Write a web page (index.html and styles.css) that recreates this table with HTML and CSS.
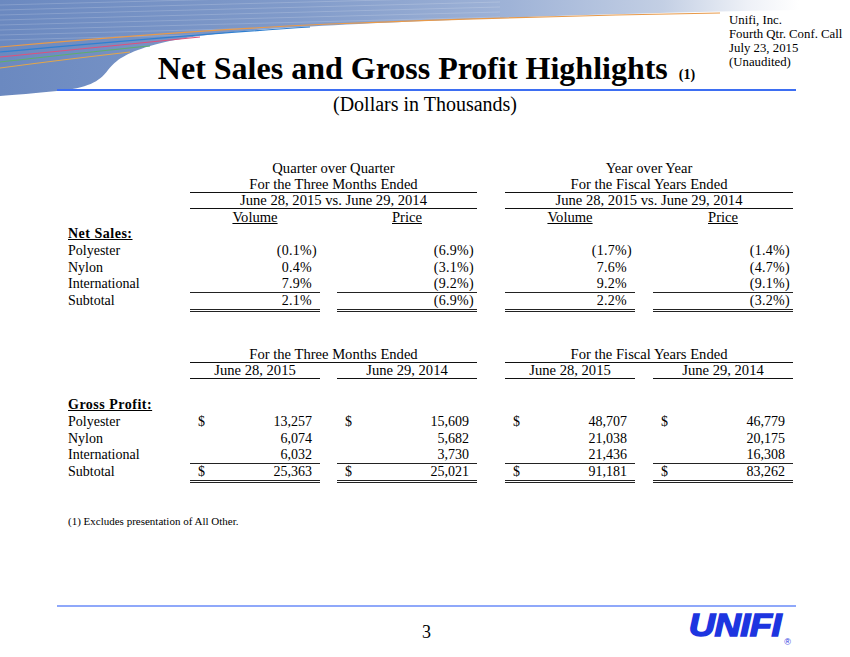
FILE: index.html
```html
<!DOCTYPE html>
<html lang="en">
<head>
<meta charset="utf-8">
<title>Net Sales and Gross Profit Highlights</title>
<link rel="stylesheet" href="styles.css">
</head>
<body>
<div class="slide">
  <header class="top">
    <svg class="swoosh" width="850" height="100" viewBox="0 0 850 100" aria-hidden="true">
      <defs>
        <linearGradient id="band" x1="0" y1="0" x2="850" y2="0" gradientUnits="userSpaceOnUse">
          <stop offset="0" stop-color="#6b89c0"/>
          <stop offset="0.35" stop-color="#819bca"/>
          <stop offset="0.6" stop-color="#9fb3d7"/>
          <stop offset="0.78" stop-color="#c3cfe4"/>
          <stop offset="0.88" stop-color="#eef1f7"/>
          <stop offset="0.94" stop-color="#ffffff"/>
        </linearGradient>
        <clipPath id="bandclip">
          <path d="M0,0 H850 V9 C660,12 440,19 300,27 C230,31 180,37 150,46 C126,53 116,60 108,70 C99,82 88,88 57,91 C35,93 15,95 0,96 Z"/>
        </clipPath>
      </defs>
      <path d="M0,0 H850 V9 C660,12 440,19 300,27 C230,31 180,37 150,46 C126,53 116,60 108,70 C99,82 88,88 57,91 C35,93 15,95 0,96 Z" fill="url(#band)"/>
      <g clip-path="url(#bandclip)" stroke="#ffffff" stroke-opacity="0.22" stroke-width="0.8" fill="none">
        <path d="M0,5 L500,-8"/>
        <path d="M0,10 L500,-3"/>
        <path d="M0,15 L500,2"/>
        <path d="M0,20 L500,7"/>
        <path d="M0,25 L500,12"/>
        <path d="M0,30 L500,17"/>
        <path d="M0,35 L500,22"/>
        <path d="M0,40 L500,27"/>
      </g>
      <g fill="none" stroke-width="1.2">
        <path d="M0,47 C90,39 200,30 330,24 C460,19 600,15 720,13" stroke="#e89a4a"/>
        <path d="M0,52 C90,44 200,34 310,27" stroke="#2f7fd0"/>
        <path d="M0,57 C70,50 140,43 200,37" stroke="#e0507a"/>
        <path d="M0,62 C55,56 105,50 150,46" stroke="#5fae6a"/>
        <path d="M0,68 C45,62 95,56 130,52" stroke="#e3a64a"/>
      </g>
    </svg>
    <div class="meta">
      <div>Unifi, Inc.</div>
      <div>Fourth Qtr. Conf. Call</div>
      <div>July 23, 2015</div>
      <div>(Unaudited)</div>
    </div>
    <h1 class="title">Net Sales and Gross Profit Highlights <span class="note">(1)</span></h1>
  </header>

  <div class="subtitle">(Dollars in Thousands)</div>

  <table class="fin t1">
    <colgroup>
      <col class="w-label"><col class="w-a"><col class="w-g1"><col class="w-b"><col class="w-g2"><col class="w-a"><col class="w-g3"><col class="w-b">
    </colgroup>
    <thead>
      <tr class="h16"><th></th><th colspan="3">Quarter over Quarter</th><th></th><th colspan="3">Year over Year</th></tr>
      <tr class="h16"><th></th><th colspan="3" class="rule">For the Three Months Ended</th><th></th><th colspan="3" class="rule">For the Fiscal Years Ended</th></tr>
      <tr class="h15"><th></th><th colspan="3" class="rule">June 28, 2015 vs. June 29, 2014</th><th></th><th colspan="3" class="rule">June 28, 2015 vs. June 29, 2014</th></tr>
      <tr class="h16"><th></th><th class="u">Volume</th><th></th><th class="u">Price</th><th></th><th class="u">Volume</th><th></th><th class="u">Price</th></tr>
    </thead>
    <tbody>
      <tr class="h17"><td class="sec">Net Sales:</td><td colspan="7"></td></tr>
      <tr class="h17"><td>Polyester</td><td class="pct">(0.1%)</td><td></td><td class="pct">(6.9%)</td><td></td><td class="pct">(1.7%)</td><td></td><td class="pct">(1.4%)</td></tr>
      <tr class="h17"><td>Nylon</td><td class="pct">0.4%<span class="pad">)</span></td><td></td><td class="pct">(3.1%)</td><td></td><td class="pct">7.6%<span class="pad">)</span></td><td></td><td class="pct">(4.7%)</td></tr>
      <tr class="h16"><td>International</td><td class="pct line">7.9%<span class="pad">)</span></td><td></td><td class="pct line">(9.2%)</td><td></td><td class="pct line">9.2%<span class="pad">)</span></td><td></td><td class="pct line">(9.1%)</td></tr>
      <tr class="h16"><td>Subtotal</td><td class="pct dbl">2.1%<span class="pad">)</span></td><td></td><td class="pct dbl">(6.9%)</td><td></td><td class="pct dbl">2.2%<span class="pad">)</span></td><td></td><td class="pct dbl">(3.2%)</td></tr>
    </tbody>
  </table>

  <table class="fin t2">
    <colgroup>
      <col class="w-label"><col class="w-a"><col class="w-g1"><col class="w-b"><col class="w-g2"><col class="w-a"><col class="w-g3"><col class="w-b">
    </colgroup>
    <thead>
      <tr class="h16"><th></th><th colspan="3" class="rule">For the Three Months Ended</th><th></th><th colspan="3" class="rule">For the Fiscal Years Ended</th></tr>
      <tr class="h15"><th></th><th class="rule">June 28, 2015</th><th></th><th class="rule">June 29, 2014</th><th></th><th class="rule">June 28, 2015</th><th></th><th class="rule">June 29, 2014</th></tr>
    </thead>
    <tbody>
      <tr class="blank"><td colspan="8"></td></tr>
      <tr class="h16"><td class="sec">Gross Profit:</td><td colspan="7"></td></tr>
      <tr class="h17">
        <td>Polyester</td>
        <td><div class="money"><span>$</span><span>13,257</span></div></td><td></td>
        <td><div class="money"><span>$</span><span>15,609</span></div></td><td></td>
        <td><div class="money"><span>$</span><span>48,707</span></div></td><td></td>
        <td><div class="money"><span>$</span><span>46,779</span></div></td>
      </tr>
      <tr class="h17">
        <td>Nylon</td>
        <td><div class="money"><span></span><span>6,074</span></div></td><td></td>
        <td><div class="money"><span></span><span>5,682</span></div></td><td></td>
        <td><div class="money"><span></span><span>21,038</span></div></td><td></td>
        <td><div class="money"><span></span><span>20,175</span></div></td>
      </tr>
      <tr class="h16">
        <td>International</td>
        <td class="line"><div class="money"><span></span><span>6,032</span></div></td><td></td>
        <td class="line"><div class="money"><span></span><span>3,730</span></div></td><td></td>
        <td class="line"><div class="money"><span></span><span>21,436</span></div></td><td></td>
        <td class="line"><div class="money"><span></span><span>16,308</span></div></td>
      </tr>
      <tr class="h16">
        <td>Subtotal</td>
        <td class="dbl"><div class="money"><span>$</span><span>25,363</span></div></td><td></td>
        <td class="dbl"><div class="money"><span>$</span><span>25,021</span></div></td><td></td>
        <td class="dbl"><div class="money"><span>$</span><span>91,181</span></div></td><td></td>
        <td class="dbl"><div class="money"><span>$</span><span>83,262</span></div></td>
      </tr>
    </tbody>
  </table>

  <p class="footnote">(1) Excludes presentation of All Other.</p>

  <footer class="foot">
    <span></span>
    <span class="page">3</span>
    <div class="logo"><span class="logo-word">UNIFI</span><span class="reg">®</span></div>
  </footer>
</div>
</body>
</html>
```

FILE: styles.css
```css
html, body {
  margin: 0;
  padding: 0;
  background: #ffffff;
}

body {
  font-family: "Liberation Serif", "Times New Roman", serif;
  color: #000000;
}

.slide {
  position: relative;
  width: 850px;
  height: 657px;
  display: flex;
  flex-direction: column;
  overflow: hidden;
}

/* ---------- header ---------- */
.top {
  position: relative;
  display: grid;
}

.swoosh {
  position: absolute;
  top: 0;
  left: 0;
  z-index: 0;
}

.meta {
  grid-area: 1 / 1;
  position: relative;
  z-index: 1;
  justify-self: start;
  margin: 13px 0 0 729px;
  font-size: 12.8px;
  line-height: 14px;
}

.title {
  grid-area: 1 / 1;
  position: relative;
  z-index: 1;
  margin: 50px 54px 0 57px;
  padding-bottom: 3px;
  border-bottom: 2px solid #3d6ef2;
  text-align: center;
  font-size: 32px;
  line-height: 36px;
  font-weight: bold;
}

.title .note {
  font-size: 14px;
  line-height: 1;
  margin-left: 3px;
}

.subtitle {
  margin-top: 1px;
  text-align: center;
  font-size: 20px;
  line-height: 24px;
}

/* ---------- tables ---------- */
.fin {
  border-collapse: separate;
  border-spacing: 0;
  table-layout: fixed;
  width: 725px;
  margin-left: 68px;
  font-size: 14px;
}

.t1 { margin-top: 44px; }
.t2 { margin-top: 34px; }

.w-label { width: 122px; }
.w-a { width: 130px; }
.w-b { width: 140px; }
.w-g1 { width: 17px; }
.w-g2 { width: 28px; }
.w-g3 { width: 18px; }

.fin th,
.fin td {
  padding: 0;
  vertical-align: top;
  white-space: nowrap;
}

.fin th {
  font-weight: normal;
  font-size: 14.6px;
  text-align: center;
}

.fin td {
  text-align: left;
}

.h15 > * { line-height: 15px; }
.h16 > * { line-height: 16px; }
.h17 > * { line-height: 17px; }
.blank > td { height: 18px; }

.rule {
  border-bottom: 1px solid #111111;
}

.u {
  text-decoration: underline;
}

.sec {
  font-weight: bold;
  text-decoration: underline;
  letter-spacing: 0.5px;
}

.pct {
  text-align: right !important;
  padding-right: 3px !important;
  letter-spacing: 0.3px;
}

.pad {
  visibility: hidden;
}

.line {
  border-bottom: 1px solid #222222;
}

.dbl {
  border-bottom: 3px double #222222;
}

.money {
  display: flex;
  justify-content: space-between;
  padding: 0 8px;
}

/* ---------- footnote ---------- */
.footnote {
  margin: 31px 0 0 68px;
  font-size: 11px;
  line-height: 14px;
}

/* ---------- footer ---------- */
.foot {
  margin: auto 54px 0 57px;
  padding: 2px 0 16px;
  border-top: 2px solid #8fa8fa;
  display: grid;
  grid-template-columns: 1fr auto 1fr;
  align-items: end;
}

.page {
  font-size: 18px;
  line-height: 18px;
}

.logo {
  justify-self: end;
  display: flex;
  align-items: flex-end;
  margin-right: 5px;
}

.logo-word {
  display: inline-block;
  font-family: "Liberation Sans", Arial, sans-serif;
  font-weight: bold;
  font-style: italic;
  font-size: 32px;
  line-height: 32px;
  color: #1d35e0;
  letter-spacing: -0.5px;
  -webkit-text-stroke: 1.4px #1d35e0;
  transform: scaleX(1.14);
  transform-origin: right bottom;
}

.reg {
  font-family: "Liberation Sans", Arial, sans-serif;
  font-size: 9px;
  line-height: 9px;
  color: #1d35e0;
  margin-left: 3px;
  margin-bottom: -6px;
}
```
